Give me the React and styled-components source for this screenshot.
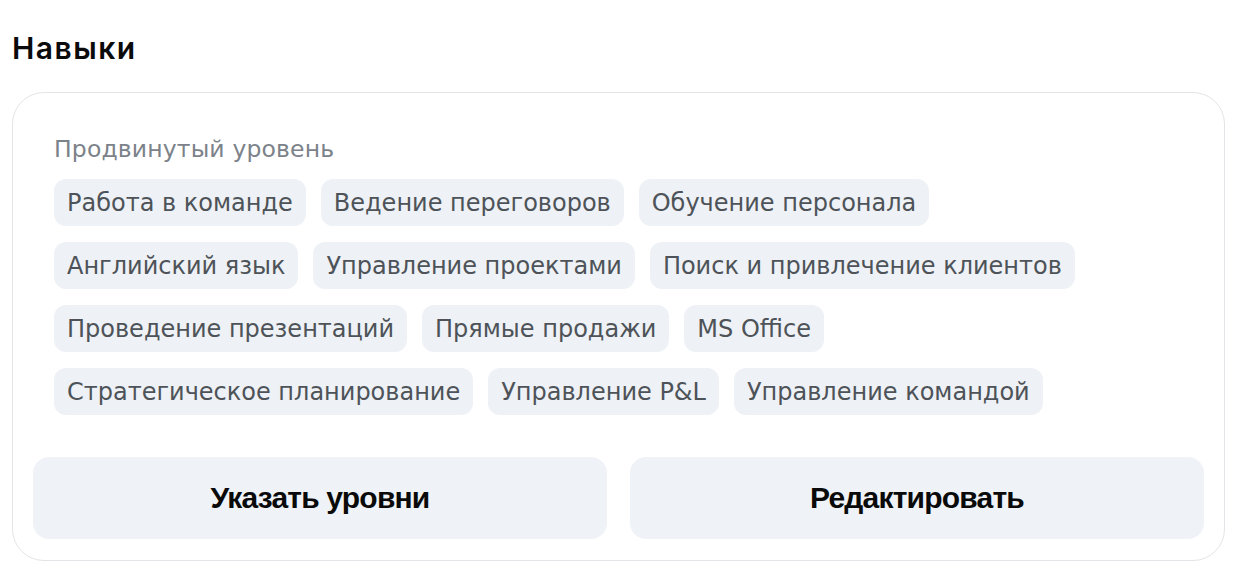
import React from "react";
import styled, { createGlobalStyle } from "styled-components";

const Global = createGlobalStyle`
  html, body { margin: 0; padding: 0; background: #ffffff; }
  body { font-family: "DejaVu Sans", Inter, sans-serif; -webkit-font-smoothing: antialiased; }
  * { box-sizing: border-box; }
`;

const Page = styled.div`
  padding: 30px 27px 0 12px;
  display: flex;
  flex-direction: column;
`;

const Title = styled.h2`
  margin: 0 0 26px;
  font-family: Inter, sans-serif;
  font-size: 30px;
  line-height: 36px;
  font-weight: 600;
  color: #0b0b0c;
  letter-spacing: 1.5px;
`;

const Card = styled.section`
  border: 1.5px solid #e2e4e7;
  border-radius: 32px;
  padding: 43px 20px 21px;
  display: flex;
  flex-direction: column;
`;

const Group = styled.div`
  padding: 0 21px;
  display: flex;
  flex-direction: column;
  gap: 17px;
`;

const Label = styled.div`
  font-family: "DejaVu Sans", sans-serif;
  font-size: 23.5px;
  line-height: 26px;
  letter-spacing: 0.15px;
  color: #7c8289;
  font-weight: 400;
`;

const Chips = styled.div`
  display: flex;
  flex-direction: column;
  gap: 16px;
`;

const ChipRow = styled.div`
  display: flex;
  gap: 15px;
`;

const Chip = styled.span`
  display: inline-flex;
  align-items: center;
  height: 47px;
  padding: 0 13px;
  border-radius: 12px;
  background: #eef1f5;
  color: #4d5358;
  font-family: "DejaVu Sans", sans-serif;
  font-size: 24px;
  font-weight: 400;
  white-space: nowrap;
`;

const Actions = styled.div`
  margin-top: 42px;
  display: grid;
  grid-template-columns: 1fr 1fr;
  gap: 23px;
`;

const Button = styled.button`
  height: 82px;
  border: none;
  border-radius: 16px;
  background: #eff2f6;
  color: #0a0a0a;
  font-family: "Liberation Sans", Arial, sans-serif;
  font-weight: 700;
  font-size: 30px;
  letter-spacing: -0.8px;
  cursor: pointer;
`;

const rows = [
  ["Работа в команде", "Ведение переговоров", "Обучение персонала"],
  ["Английский язык", "Управление проектами", "Поиск и привлечение клиентов"],
  ["Проведение презентаций", "Прямые продажи", "MS Office"],
  ["Стратегическое планирование", "Управление P&L", "Управление командой"],
];

export default function App() {
  return (
    <>
      <Global />
      <Page>
        <Title>Навыки</Title>
        <Card>
          <Group>
            <Label>Продвинутый уровень</Label>
            <Chips>
              {rows.map((row, i) => (
                <ChipRow key={i}>
                  {row.map((s) => (
                    <Chip key={s}>{s}</Chip>
                  ))}
                </ChipRow>
              ))}
            </Chips>
          </Group>
          <Actions>
            <Button>Указать уровни</Button>
            <Button>Редактировать</Button>
          </Actions>
        </Card>
      </Page>
    </>
  );
}
